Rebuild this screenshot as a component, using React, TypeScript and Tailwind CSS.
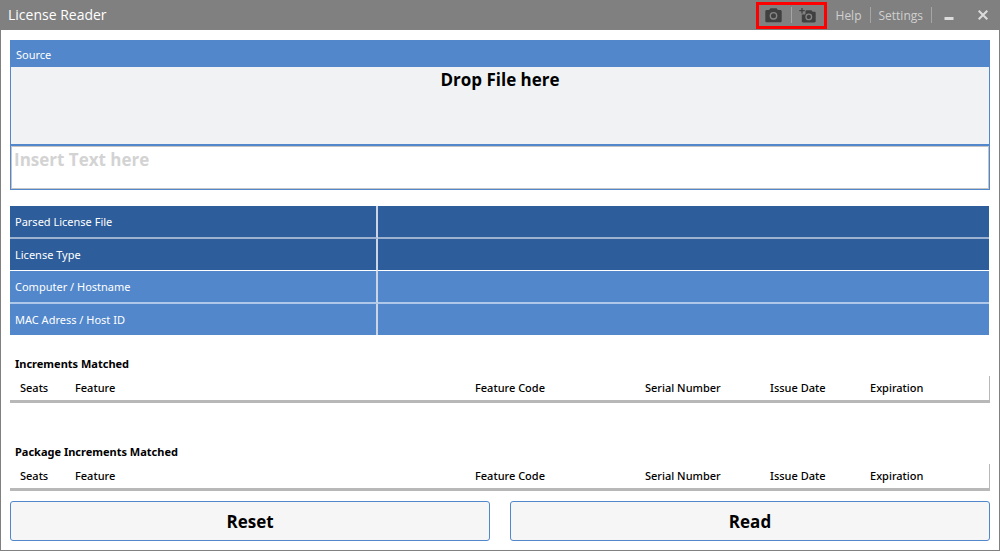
import React from "react";

const infoRows = [
  { label: "Parsed License File", value: "", dark: true, line: "border-[#9db2d1]" },
  { label: "License Type", value: "", dark: true, line: "border-white" },
  { label: "Computer / Hostname", value: "", dark: false, line: "border-[#afc8e9]" },
  { label: "MAC Adress / Host ID", value: "", dark: false, line: "border-transparent" },
];

const columns = ["Seats", "Feature", "Feature Code", "Serial Number", "Issue Date", "Expiration"];

function CameraIcon() {
  return (
    <svg width="17" height="15" viewBox="0 0 17 15" aria-hidden="true">
      <path
        fill="#404040"
        d="M5.4 0.3h6.2l1.3 1.7h2.4c.8 0 1.4.6 1.4 1.4v9.5c0 .8-.6 1.4-1.4 1.4H1.7c-.8 0-1.4-.6-1.4-1.4V3.4c0-.8.6-1.4 1.4-1.4h2.4z"
      />
      <circle cx="8.5" cy="7.8" r="3.2" fill="#404040" stroke="#858585" strokeWidth="1.4" />
    </svg>
  );
}

function CameraAddIcon() {
  return (
    <svg width="17" height="15" viewBox="0 0 17 15" aria-hidden="true">
      <path d="M3 0v5.4M0.3 2.7h5.4" stroke="#404040" strokeWidth="1.3" />
      <path
        fill="#404040"
        d="M7.2 2.3h5.2l1.2 1.5h1.9c.7 0 1.2.5 1.2 1.2v8.2c0 .7-.5 1.2-1.2 1.2H4c-.7 0-1.2-.5-1.2-1.2V6.6h2.4c.8 0 1.3-.5 1.3-1.2V3.1z"
      />
      <circle cx="9.8" cy="8.9" r="2.8" fill="#404040" stroke="#858585" strokeWidth="1.3" />
    </svg>
  );
}

function Divider() {
  return <span className="h-4 w-px bg-[#a5a5a5]" />;
}

function TitleBar() {
  return (
    <header className="flex h-[30px] items-center bg-[#808080] text-[#d0d0d0]">
      <h1 className="flex-1 pl-[7px] text-sm text-white">License Reader</h1>
      <div className="mr-[9px] flex h-[27px] items-center border-3 border-[#ff0000]">
        <button type="button" aria-label="Screenshot" className="flex w-8 items-center justify-start pl-[6px]">
          <CameraIcon />
        </button>
        <Divider />
        <button type="button" aria-label="Add screenshot" className="flex w-8 items-center justify-center">
          <CameraAddIcon />
        </button>
      </div>
      <button type="button" className="mr-2 pt-px text-xs leading-4">Help</button>
      <Divider />
      <button type="button" className="mx-2 pt-px text-xs leading-4">Settings</button>
      <Divider />
      <button type="button" aria-label="Minimize" className="flex w-[34px] justify-center">
        <svg width="10" height="12" viewBox="0 0 10 12" aria-hidden="true">
          <path d="M0.5 9.5h9" stroke="#dcdcdc" strokeWidth="3" />
        </svg>
      </button>
      <button type="button" aria-label="Close" className="flex w-[33px] justify-center">
        <svg width="10" height="10" viewBox="0 0 10 10" aria-hidden="true">
          <path d="M0.7 0.7l8.6 8.6M9.3 0.7l-8.6 8.6" stroke="#dcdcdc" strokeWidth="2" />
        </svg>
      </button>
    </header>
  );
}

function IncrementTable({ title }: { title: string }) {
  return (
    <table className="w-full table-fixed border-separate border-spacing-0 text-left font-['Noto_Sans',sans-serif] text-[11px] leading-4">
      <caption className="h-6 pl-[5px] text-left leading-6 font-bold">{title}</caption>
      <colgroup>
        <col className="w-[55px]" />
        <col />
        <col className="w-[170px]" />
        <col className="w-[125px]" />
        <col className="w-[100px]" />
        <col className="w-[130px]" />
      </colgroup>
      <thead>
        <tr>
          {columns.map((name) => (
            <th
              key={name}
              scope="col"
              className="h-[27px] border-b-3 border-[#b8b8b8] p-0 pl-[10px] font-medium last:border-r"
            >
              {name}
            </th>
          ))}
        </tr>
      </thead>
    </table>
  );
}

export default function App() {
  return (
    <div className="flex min-h-screen flex-col border-r border-b border-l border-[#808080] bg-white font-['Open_Sans','Noto_Sans',sans-serif] text-black">
      <TitleBar />
      <main className="flex flex-1 flex-col px-[9px] pt-[10px] pb-[9px]">
        <section className="border border-[#5287cb]">
          <h2 className="h-[26px] bg-[#5287cb] pl-[5px] font-['Noto_Sans',sans-serif] text-[11px] leading-7 text-white">
            Source
          </h2>
          <div className="box-content h-[77px] border-b-2 border-[#5287cb] bg-[#f1f2f4] text-center text-[17px] leading-[26px] font-bold">
            Drop File here
          </div>
          <textarea
            aria-label="License text"
            placeholder="Insert Text here"
            className="block h-[43px] w-full resize-none border border-[#c4c4c4] px-0.5 text-[17px] leading-[26px] font-bold outline-none placeholder:text-[#d3d3d3] placeholder:opacity-100"
          />
        </section>

        <table className="mt-4 w-full table-fixed border-separate border-spacing-0 pr-px font-['Noto_Sans',sans-serif] text-[11px] leading-4 text-white">
          <colgroup>
            <col className="w-[368px]" />
            <col />
          </colgroup>
          <tbody>
            {infoRows.map((row, i) => {
              const last = i === infoRows.length - 1;
              const size = last ? "h-[31px]" : i === 1 ? "h-8 border-b" : "h-[33px] border-b-2";
              const fill = row.dark ? "bg-[#2d5d9a]" : "bg-[#5287cb]";
              return (
                <tr key={row.label}>
                  <th
                    scope="row"
                    className={`${size} ${row.line} ${fill} border-r-2 border-r-[#cbd5e5] p-0 pl-[5px] text-left font-normal`}
                  >
                    {row.label}
                  </th>
                  <td className={`${size} ${row.line} ${fill} p-0 px-[5px]`}>{row.value}</td>
                </tr>
              );
            })}
          </tbody>
        </table>

        <div className="mt-[17px] flex flex-col gap-[37px]">
          <IncrementTable title="Increments Matched" />
          <IncrementTable title="Package Increments Matched" />
        </div>

        <div className="mt-auto grid grid-cols-2 gap-5">
          <button type="button" className="h-10 rounded-[3px] border border-[#5287cb] bg-[#f6f6f6] pt-px text-[17px] leading-6 font-bold">
            Reset
          </button>
          <button type="button" className="h-10 rounded-[3px] border border-[#5287cb] bg-[#f6f6f6] pt-px text-[17px] leading-6 font-bold">
            Read
          </button>
        </div>
      </main>
    </div>
  );
}
